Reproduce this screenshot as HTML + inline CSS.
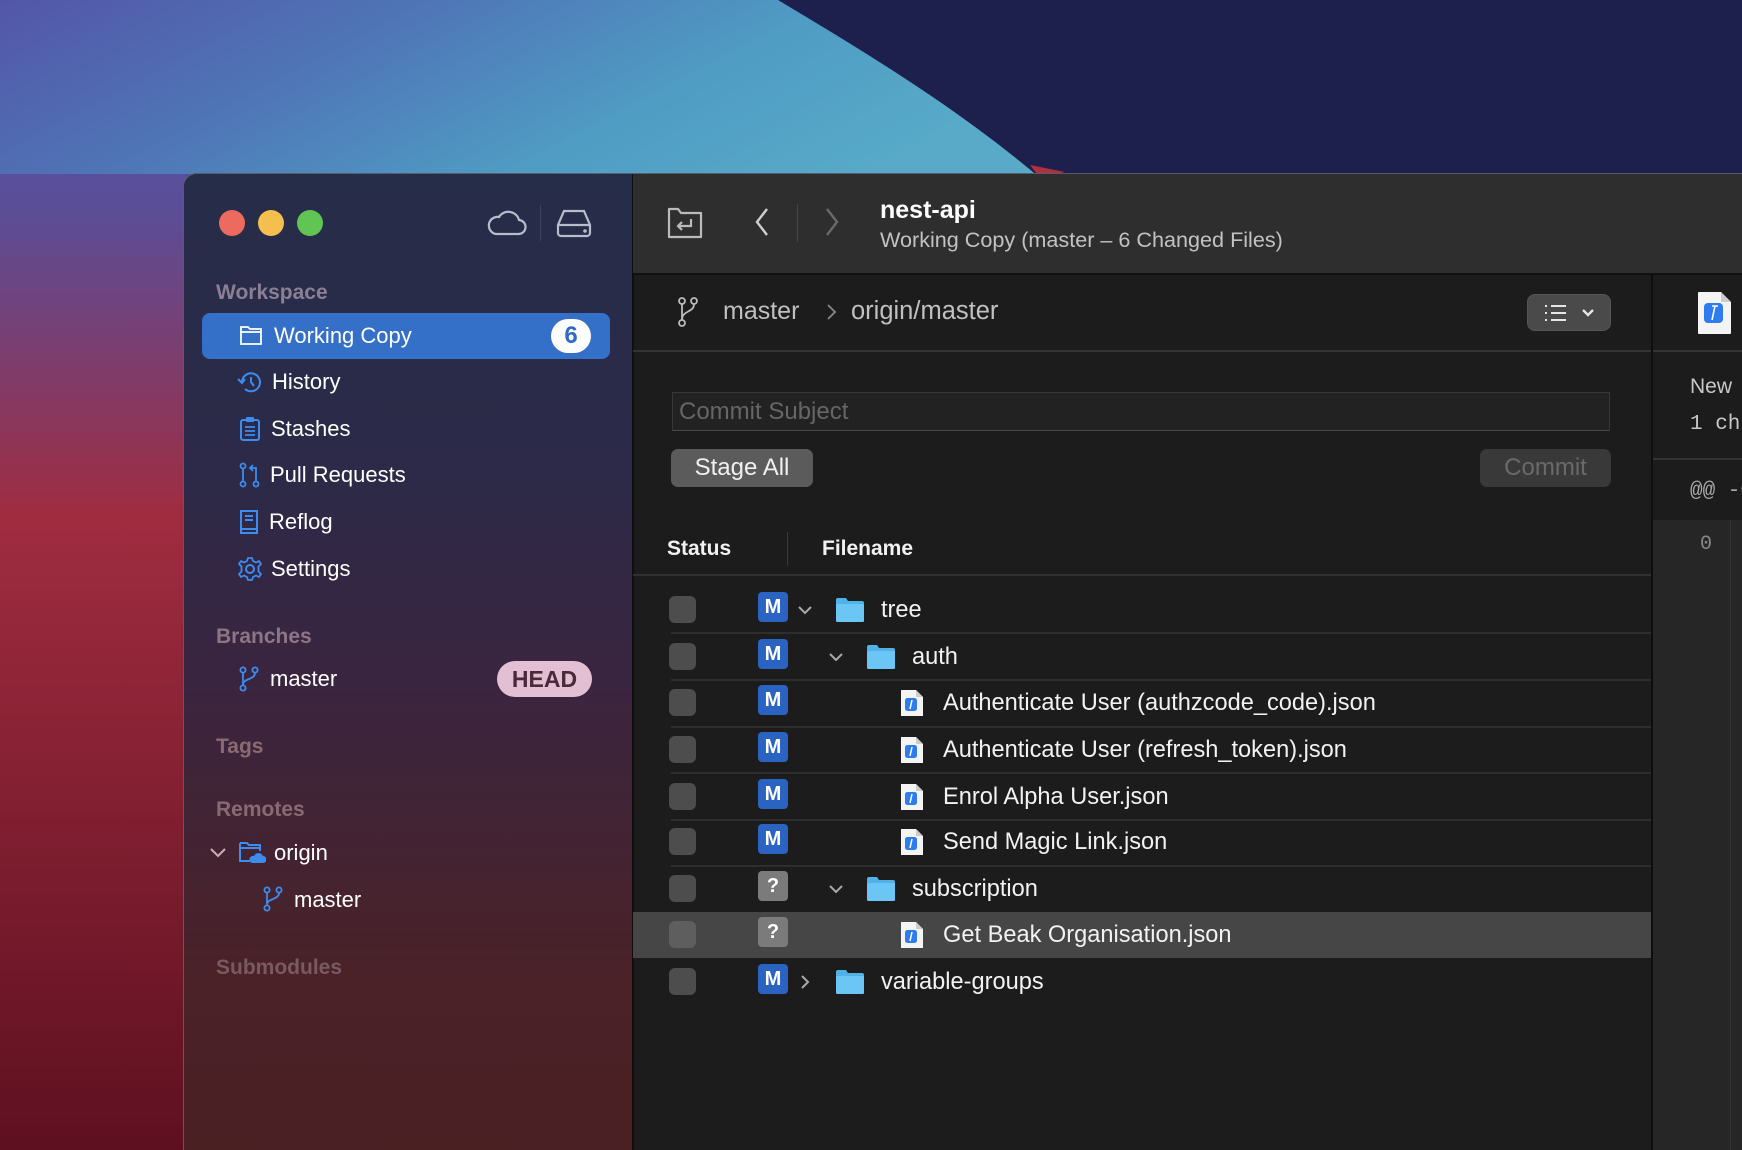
<!DOCTYPE html>
<html style="overflow:hidden;width:1742px;height:1150px"><head><meta charset="utf-8"><style>
*{margin:0;padding:0;box-sizing:border-box}
body{width:1742px;height:1150px;overflow:hidden;position:relative;font-family:"Liberation Sans",sans-serif;background:#1c1f4a}
.a{position:absolute;white-space:nowrap}
.t{line-height:30px;height:30px}
.sh{color:#8a7f95;font-size:21px;font-weight:bold}
.si{color:#fff;font-size:22px}
.fn{color:#f2f2f2;font-size:23.6px}
.cb{position:absolute;left:669px;width:27px;height:27px;border-radius:6px;background:#4d4d4d}
.bd{position:absolute;left:758px;width:30px;height:30px;border-radius:4px;background:#2a63c2;color:#fff;font-weight:bold;font-size:20px;text-align:center;line-height:30px}
.q{background:#7b7b7b}
.sep{position:absolute;left:671px;width:980px;height:2px;background:#2e2e2e}
</style></head><body>
<svg class="a" style="left:0;top:0" width="1742" height="1150">
<defs>
<linearGradient id="wl" x1="0" y1="0" x2="1" y2="0.3"><stop offset="0" stop-color="#5356a8"/><stop offset="0.35" stop-color="#4f74b6"/><stop offset="0.7" stop-color="#4f9cc4"/><stop offset="1" stop-color="#58aac8"/></linearGradient>
<linearGradient id="lv" x1="0" y1="0" x2="0" y2="1"><stop offset="0" stop-color="#5356a8"/><stop offset="0.18" stop-color="#5a4e98"/><stop offset="0.45" stop-color="#a02c40"/><stop offset="1" stop-color="#5e1020"/></linearGradient>
</defs>
<rect width="1742" height="1150" fill="url(#lv)"/>
<rect width="1100" height="174" fill="url(#wl)"/>
<path d="M778 0 C 870 55 960 110 1040 178 L1742 178 L1742 0 Z" fill="#1d1f4c"/>
<path d="M1030 165 L1065 172 L1040 178 Z" fill="#b03040"/>
</svg>
<!-- window -->
<div class="a" style="left:183px;top:173px;width:1600px;height:1000px;border-radius:14px 0 0 0;overflow:hidden;border:1px solid #5a5a6a;background:#1c1c1c">
 <div class="a" style="left:0;top:0;width:448px;height:1000px;background:linear-gradient(180deg,#262d48 0%,#2c2a48 30%,#3a2540 50%,#4a2228 80%,#4a1f22 100%)"></div>
 <div class="a" style="left:448px;top:0;width:2px;height:1000px;background:#0e0e0e"></div>
</div>
<!-- traffic lights -->
<div class="a" style="left:219px;top:210px;width:26px;height:26px;border-radius:50%;background:#ed6a5e"></div>
<div class="a" style="left:258px;top:210px;width:26px;height:26px;border-radius:50%;background:#f4bf4f"></div>
<div class="a" style="left:297px;top:210px;width:26px;height:26px;border-radius:50%;background:#61c554"></div>
<svg class="a" style="left:487px;top:207px" width="40" height="32" viewBox="0 0 40 32"><path d="M9 27 H31 A7 7 0 0 0 32 13 A11 11 0 0 0 12 10 A8 8 0 0 0 9 27 Z" fill="none" stroke="#b8bccb" stroke-width="2.2"/></svg>
<div class="a" style="left:540px;top:205px;width:1px;height:36px;background:#3c4258"></div>
<svg class="a" style="left:554px;top:207px" width="40" height="32" viewBox="0 0 40 32"><path d="M10 4 H30 L36 18 V26 A3 3 0 0 1 33 29 H7 A3 3 0 0 1 4 26 V18 Z M4 18 H36" fill="none" stroke="#b8bccb" stroke-width="2.2"/><circle cx="31" cy="24" r="1.8" fill="#b8bccb"/></svg>
<!-- sidebar -->
<div class="a t sh" style="left:216px;top:278px">Workspace</div>
<div class="a" style="left:202px;top:313px;width:408px;height:46px;border-radius:8px;background:#3570c8"></div>
<svg class="a" style="left:239px;top:324px" width="24" height="22" viewBox="0 0 24 22"><path d="M2 3 H9 L11 5 H22 V20 H2 Z M2 8 H22" fill="none" stroke="#fff" stroke-width="1.8"/></svg>
<div class="a t si" style="left:274px;top:321px">Working Copy</div>
<div class="a" style="left:551px;top:319px;width:40px;height:34px;border-radius:17px;background:#fff;color:#2f6ac4;font-weight:bold;font-size:24px;text-align:center;line-height:34px">6</div>
<svg class="a" style="left:237px;top:369px" width="26" height="26" viewBox="0 0 26 26"><path d="M5 13 A9 9 0 1 1 8 20" fill="none" stroke="#3d8cf0" stroke-width="2"/><path d="M1 10 L5 14 L8 10" fill="none" stroke="#3d8cf0" stroke-width="2"/><path d="M14 8 V13 L17 17" fill="none" stroke="#3d8cf0" stroke-width="2"/></svg>
<div class="a t si" style="left:272px;top:367px">History</div>
<svg class="a" style="left:238px;top:416px" width="24" height="26" viewBox="0 0 24 26"><rect x="3" y="4" width="18" height="20" rx="2" fill="none" stroke="#3d8cf0" stroke-width="2"/><rect x="8" y="1" width="8" height="5" rx="1" fill="#3d8cf0"/><path d="M7 11 H17 M7 15 H17 M7 19 H17" stroke="#3d8cf0" stroke-width="1.8"/></svg>
<div class="a t si" style="left:271px;top:414px">Stashes</div>
<svg class="a" style="left:238px;top:462px" width="24" height="26" viewBox="0 0 24 26"><circle cx="5" cy="4" r="2.5" fill="none" stroke="#3d8cf0" stroke-width="1.8"/><circle cx="5" cy="22" r="2.5" fill="none" stroke="#3d8cf0" stroke-width="1.8"/><circle cx="18" cy="22" r="2.5" fill="none" stroke="#3d8cf0" stroke-width="1.8"/><path d="M5 7 V19 M18 19 V6 H13 M15 3 L12 6 L15 9" fill="none" stroke="#3d8cf0" stroke-width="1.8"/></svg>
<div class="a t si" style="left:270px;top:460px">Pull Requests</div>
<svg class="a" style="left:238px;top:509px" width="22" height="26" viewBox="0 0 22 26"><path d="M3 2 H19 V20 H3 Z M3 20 V24 H19 V20 M7 7 H15 M7 11 H15" fill="none" stroke="#3d8cf0" stroke-width="2"/></svg>
<div class="a t si" style="left:269px;top:507px">Reflog</div>
<svg class="a" style="left:237px;top:556px" width="26" height="26" viewBox="0 0 26 26"><circle cx="13" cy="13" r="4" fill="none" stroke="#3d8cf0" stroke-width="2"/><path d="M11 2 H15 L16 5 L19 6.5 L22 5 L24 8 L21.5 10.5 V15.5 L24 18 L22 21 L19 19.5 L16 21 L15 24 H11 L10 21 L7 19.5 L4 21 L2 18 L4.5 15.5 V10.5 L2 8 L4 5 L7 6.5 L10 5 Z" fill="none" stroke="#3d8cf0" stroke-width="1.8" stroke-linejoin="round"/></svg>
<div class="a t si" style="left:271px;top:554px">Settings</div>
<div class="a t sh" style="left:216px;top:622px;color:#8e7585">Branches</div>
<svg class="a" style="left:238px;top:666px" width="22" height="26" viewBox="0 0 22 26"><circle cx="5" cy="4" r="2.6" fill="none" stroke="#3d8cf0" stroke-width="1.8"/><circle cx="17" cy="4" r="2.6" fill="none" stroke="#3d8cf0" stroke-width="1.8"/><circle cx="5" cy="22" r="2.6" fill="none" stroke="#3d8cf0" stroke-width="1.8"/><path d="M5 7 V19 M17 7 C17 14 5 12 5 19" fill="none" stroke="#3d8cf0" stroke-width="1.8"/></svg>
<div class="a t si" style="left:270px;top:664px">master</div>
<div class="a" style="left:497px;top:661px;width:95px;height:36px;border-radius:18px;background:#e2bfd2;color:#4a2a3a;font-weight:bold;font-size:23px;text-align:center;line-height:36px">HEAD</div>
<div class="a t sh" style="left:216px;top:732px;color:#8a6a72">Tags</div>
<div class="a t sh" style="left:216px;top:795px;color:#8a6a72">Remotes</div>
<svg class="a" style="left:208px;top:846px" width="20" height="14" viewBox="0 0 20 14"><path d="M3 3 L10 10 L17 3" fill="none" stroke="#c9b0b5" stroke-width="2"/></svg>
<svg class="a" style="left:238px;top:840px" width="28" height="26" viewBox="0 0 28 26"><path d="M2 3 H9 L11 5 H22 V11 M2 8 H22 M2 3 V21 H12" fill="none" stroke="#3d8cf0" stroke-width="2"/><path d="M14 23 H25 A3.5 3.5 0 0 0 25 16 A5 5 0 0 0 16 16 A3.5 3.5 0 0 0 14 23 Z" fill="#3d8cf0"/></svg>
<div class="a t si" style="left:274px;top:838px">origin</div>
<svg class="a" style="left:262px;top:886px" width="22" height="26" viewBox="0 0 22 26"><circle cx="5" cy="4" r="2.6" fill="none" stroke="#3d8cf0" stroke-width="1.8"/><circle cx="17" cy="4" r="2.6" fill="none" stroke="#3d8cf0" stroke-width="1.8"/><circle cx="5" cy="22" r="2.6" fill="none" stroke="#3d8cf0" stroke-width="1.8"/><path d="M5 7 V19 M17 7 C17 14 5 12 5 19" fill="none" stroke="#3d8cf0" stroke-width="1.8"/></svg>
<div class="a t si" style="left:294px;top:885px">master</div>
<div class="a t sh" style="left:216px;top:953px;color:#7a5a62">Submodules</div>
<!-- main title bar -->
<div class="a" style="left:633px;top:174px;width:1109px;height:100px;background:#2e2e2e"></div>
<div class="a" style="left:633px;top:273px;width:1109px;height:2px;background:#111"></div>
<svg class="a" style="left:666px;top:206px" width="38" height="34" viewBox="0 0 38 34"><path d="M3 3 H12 L15 7 H35 V31 H3 Z" fill="none" stroke="#bbb" stroke-width="2.2" stroke-linejoin="round"/><path d="M25 13 V20 H12 M16 16 L12 20 L16 24" fill="none" stroke="#bbb" stroke-width="2.2"/></svg>
<svg class="a" style="left:752px;top:206px" width="20" height="32" viewBox="0 0 20 32"><path d="M15 3 L5 16 L15 29" fill="none" stroke="#cfcfcf" stroke-width="2.4"/></svg>
<div class="a" style="left:797px;top:204px;width:1px;height:38px;background:#454545"></div>
<svg class="a" style="left:822px;top:206px" width="20" height="32" viewBox="0 0 20 32"><path d="M5 3 L15 16 L5 29" fill="none" stroke="#6a6a6a" stroke-width="2.4"/></svg>
<div class="a" style="left:880px;top:195px;font-size:25px;font-weight:bold;color:#fff;line-height:30px">nest-api</div>
<div class="a" style="left:880px;top:225px;font-size:21.6px;color:#c2c2c2;line-height:30px">Working Copy (master – 6 Changed Files)</div>
<!-- branch row -->
<svg class="a" style="left:676px;top:296px" width="24" height="32" viewBox="0 0 24 32"><circle cx="6" cy="5" r="3" fill="none" stroke="#bbb" stroke-width="1.8"/><circle cx="18" cy="5" r="3" fill="none" stroke="#bbb" stroke-width="1.8"/><circle cx="6" cy="27" r="3" fill="none" stroke="#bbb" stroke-width="1.8"/><path d="M6 8 V24 M18 8 C18 17 6 14 6 24" fill="none" stroke="#bbb" stroke-width="1.8"/></svg>
<div class="a" style="left:723px;top:296px;font-size:25px;color:#c0c0c0;line-height:30px">master</div>
<svg class="a" style="left:824px;top:302px" width="14" height="20" viewBox="0 0 14 20"><path d="M4 3 L11 10 L4 17" fill="none" stroke="#888" stroke-width="1.8"/></svg>
<div class="a" style="left:851px;top:296px;font-size:25.5px;color:#c0c0c0;line-height:30px">origin/master</div>
<div class="a" style="left:1527px;top:294px;width:84px;height:37px;border-radius:8px;background:#4a4a4a;border:1px solid #555"></div>
<svg class="a" style="left:1542px;top:301px" width="56" height="24" viewBox="0 0 56 24"><path d="M3 5 H5 M3 12 H5 M3 19 H5 M9 5 H24 M9 12 H24 M9 19 H24" stroke="#e6e6e6" stroke-width="2"/><path d="M41 9 L46 14 L51 9" fill="none" stroke="#e6e6e6" stroke-width="2.4"/></svg>
<div class="a" style="left:633px;top:350px;width:1018px;height:2px;background:#333"></div>
<div class="a" style="left:1651px;top:274px;width:2px;height:876px;background:#0e0e0e"></div>
<!-- commit -->
<div class="a" style="left:672px;top:392px;width:938px;height:39px;background:#222;border:1px solid #383838;border-bottom-color:#4a4a4a"></div>
<div class="a" style="left:679px;top:397px;font-size:24px;color:#666;line-height:30px">Commit Subject</div>
<div class="a" style="left:671px;top:449px;width:142px;height:38px;border-radius:7px;background:#5b5b5b;color:#f0f0f0;font-size:24px;text-align:center;line-height:38px">Stage All</div>
<div class="a" style="left:1480px;top:449px;width:131px;height:38px;border-radius:7px;background:#393939;color:#6a6a6a;font-size:24px;text-align:center;line-height:38px">Commit</div>
<div class="a" style="left:667px;top:534px;font-size:21px;font-weight:bold;color:#f2f2f2;line-height:30px">Status</div>
<div class="a" style="left:787px;top:532px;width:1px;height:34px;background:#3a3a3a"></div>
<div class="a" style="left:822px;top:534px;font-size:21px;font-weight:bold;color:#f2f2f2;line-height:30px">Filename</div>
<div class="a" style="left:633px;top:574px;width:1018px;height:2px;background:#303030"></div>
<!-- rows -->
<div class="a" style="left:633px;top:912px;width:1018px;height:46px;background:#464646"></div>
<div class="sep" style="top:632px"></div><div class="sep" style="top:679px"></div><div class="sep" style="top:726px"></div><div class="sep" style="top:772px"></div><div class="sep" style="top:819px"></div><div class="sep" style="top:865px"></div>
<div class="cb" style="top:596px"></div><div class="cb" style="top:643px"></div><div class="cb" style="top:689px"></div><div class="cb" style="top:736px"></div><div class="cb" style="top:783px"></div><div class="cb" style="top:828px"></div><div class="cb" style="top:875px"></div><div class="cb" style="top:921px;background:#5e5e5e"></div><div class="cb" style="top:968px"></div>
<div class="bd" style="top:592px">M</div><div class="bd" style="top:639px">M</div><div class="bd" style="top:685px">M</div><div class="bd" style="top:732px">M</div><div class="bd" style="top:779px">M</div><div class="bd" style="top:824px">M</div><div class="bd q" style="top:871px">?</div><div class="bd q" style="top:917px">?</div><div class="bd" style="top:964px">M</div>
<!-- chevrons -->
<svg class="a" style="left:796px;top:603px" width="18" height="14" viewBox="0 0 18 14"><path d="M3 4 L9 10 L15 4" fill="none" stroke="#aaa" stroke-width="2"/></svg>
<svg class="a" style="left:827px;top:650px" width="18" height="14" viewBox="0 0 18 14"><path d="M3 4 L9 10 L15 4" fill="none" stroke="#aaa" stroke-width="2"/></svg>
<svg class="a" style="left:827px;top:882px" width="18" height="14" viewBox="0 0 18 14"><path d="M3 4 L9 10 L15 4" fill="none" stroke="#aaa" stroke-width="2"/></svg>
<svg class="a" style="left:798px;top:973px" width="14" height="18" viewBox="0 0 14 18"><path d="M4 3 L10 9 L4 15" fill="none" stroke="#aaa" stroke-width="2"/></svg>
<!-- folders -->
<svg class="a" style="left:835px;top:597px" width="30" height="26" viewBox="0 0 30 26"><path d="M1 3 Q1 1 3 1 H11 L13 4 H27 Q29 4 29 6 V24 Q29 25 27 25 H3 Q1 25 1 23 Z" fill="#4fb3ea"/><rect x="1" y="7" width="28" height="18" rx="1.5" fill="#6cc6f5"/></svg>
<svg class="a" style="left:866px;top:644px" width="30" height="26" viewBox="0 0 30 26"><path d="M1 3 Q1 1 3 1 H11 L13 4 H27 Q29 4 29 6 V24 Q29 25 27 25 H3 Q1 25 1 23 Z" fill="#4fb3ea"/><rect x="1" y="7" width="28" height="18" rx="1.5" fill="#6cc6f5"/></svg>
<svg class="a" style="left:866px;top:876px" width="30" height="26" viewBox="0 0 30 26"><path d="M1 3 Q1 1 3 1 H11 L13 4 H27 Q29 4 29 6 V24 Q29 25 27 25 H3 Q1 25 1 23 Z" fill="#4fb3ea"/><rect x="1" y="7" width="28" height="18" rx="1.5" fill="#6cc6f5"/></svg>
<svg class="a" style="left:835px;top:969px" width="30" height="26" viewBox="0 0 30 26"><path d="M1 3 Q1 1 3 1 H11 L13 4 H27 Q29 4 29 6 V24 Q29 25 27 25 H3 Q1 25 1 23 Z" fill="#4fb3ea"/><rect x="1" y="7" width="28" height="18" rx="1.5" fill="#6cc6f5"/></svg>
<!-- file icons -->
<svg class="a" style="left:900px;top:689px" width="24" height="28" viewBox="0 0 24 28"><path d="M1 1 H16 L23 8 V27 H1 Z" fill="#f4f4f4"/><path d="M16 1 V8 H23" fill="#ccc"/><rect x="5" y="9" width="12" height="13" rx="2.5" fill="#2f7cf0"/><path d="M12 11 L10 20" stroke="#fff" stroke-width="1.5"/></svg>
<svg class="a" style="left:900px;top:736px" width="24" height="28" viewBox="0 0 24 28"><path d="M1 1 H16 L23 8 V27 H1 Z" fill="#f4f4f4"/><path d="M16 1 V8 H23" fill="#ccc"/><rect x="5" y="9" width="12" height="13" rx="2.5" fill="#2f7cf0"/><path d="M12 11 L10 20" stroke="#fff" stroke-width="1.5"/></svg>
<svg class="a" style="left:900px;top:783px" width="24" height="28" viewBox="0 0 24 28"><path d="M1 1 H16 L23 8 V27 H1 Z" fill="#f4f4f4"/><path d="M16 1 V8 H23" fill="#ccc"/><rect x="5" y="9" width="12" height="13" rx="2.5" fill="#2f7cf0"/><path d="M12 11 L10 20" stroke="#fff" stroke-width="1.5"/></svg>
<svg class="a" style="left:900px;top:828px" width="24" height="28" viewBox="0 0 24 28"><path d="M1 1 H16 L23 8 V27 H1 Z" fill="#f4f4f4"/><path d="M16 1 V8 H23" fill="#ccc"/><rect x="5" y="9" width="12" height="13" rx="2.5" fill="#2f7cf0"/><path d="M12 11 L10 20" stroke="#fff" stroke-width="1.5"/></svg>
<svg class="a" style="left:900px;top:921px" width="24" height="28" viewBox="0 0 24 28"><path d="M1 1 H16 L23 8 V27 H1 Z" fill="#f4f4f4"/><path d="M16 1 V8 H23" fill="#ccc"/><rect x="5" y="9" width="12" height="13" rx="2.5" fill="#2f7cf0"/><path d="M12 11 L10 20" stroke="#fff" stroke-width="1.5"/></svg>
<!-- names -->
<div class="a t fn" style="left:881px;top:595px">tree</div>
<div class="a t fn" style="left:912px;top:642px">auth</div>
<div class="a t fn" style="left:943px;top:688px">Authenticate User (authzcode_code).json</div>
<div class="a t fn" style="left:943px;top:735px">Authenticate User (refresh_token).json</div>
<div class="a t fn" style="left:943px;top:782px">Enrol Alpha User.json</div>
<div class="a t fn" style="left:943px;top:827px">Send Magic Link.json</div>
<div class="a t fn" style="left:912px;top:874px">subscription</div>
<div class="a t fn" style="left:943px;top:920px">Get Beak Organisation.json</div>
<div class="a t fn" style="left:881px;top:967px">variable-groups</div>
<!-- right pane -->
<svg class="a" style="left:1697px;top:291px" width="36" height="44" viewBox="0 0 36 44"><path d="M1 2 Q1 1 2 1 H24 L34 11 V42 Q34 43 33 43 H2 Q1 43 1 42 Z" fill="#f4f4f4"/><path d="M24 1 V11 H34" fill="#ccc"/><rect x="7" y="12" width="19" height="20" rx="4" fill="#2f7cf0"/><path d="M18 15 L15 29 M15 15 H21" stroke="#fff" stroke-width="1.6"/></svg>
<div class="a" style="left:1653px;top:350px;width:89px;height:2px;background:#333"></div>
<div class="a" style="left:1690px;top:372px;font-size:21px;color:#c8c8c8;line-height:30px">New</div>
<div class="a" style="left:1690px;top:410px;font-size:21px;color:#c8c8c8;line-height:30px;font-family:'Liberation Mono',monospace">1 ch</div>
<div class="a" style="left:1653px;top:458px;width:89px;height:2px;background:#333"></div>
<div class="a" style="left:1690px;top:477px;font-size:21px;color:#aaa;line-height:30px;font-family:'Liberation Mono',monospace">@@ -0</div>
<div class="a" style="left:1653px;top:520px;width:89px;height:630px;background:#262626"></div>
<div class="a" style="left:1730px;top:520px;width:1px;height:630px;background:#333"></div>
<div class="a" style="left:1700px;top:530px;font-size:20px;color:#888;line-height:30px;font-family:'Liberation Mono',monospace">0</div>
</body></html>
